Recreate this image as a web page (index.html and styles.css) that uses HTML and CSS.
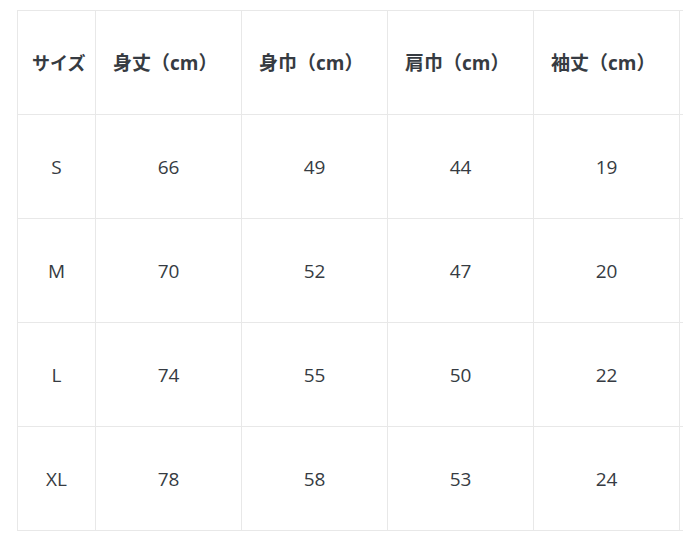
FILE: index.html
```html
<!DOCTYPE html>
<html lang="ja">
<head>
<meta charset="utf-8">
<link rel="stylesheet" href="styles.css">
</head>
<body>
<div class="wrap">
<table class="size-table">
  <colgroup>
    <col class="col-size">
    <col class="col-val">
    <col class="col-val">
    <col class="col-val">
    <col class="col-val">
    <col class="col-val">
  </colgroup>
  <thead>
    <tr>
      <th class="th-size">サイズ</th>
      <th>身丈（cm）</th>
      <th>身巾（cm）</th>
      <th>肩巾（cm）</th>
      <th>袖丈（cm）</th>
      <th></th>
    </tr>
  </thead>
  <tbody>
    <tr><td>S</td><td>66</td><td>49</td><td>44</td><td>19</td><td></td></tr>
    <tr><td>M</td><td>70</td><td>52</td><td>47</td><td>20</td><td></td></tr>
    <tr><td>L</td><td>74</td><td>55</td><td>50</td><td>22</td><td></td></tr>
    <tr><td>XL</td><td>78</td><td>58</td><td>53</td><td>24</td><td></td></tr>
  </tbody>
</table>
</div>
</body>
</html>
```

FILE: styles.css
```css
html, body {
  margin: 0;
  padding: 0;
  background: #ffffff;
  overflow: hidden;
}
.wrap {
  padding: 10px 0 0 17px;
  width: 900px;
}
.size-table {
  border-collapse: collapse;
  table-layout: fixed;
  width: 808px;
  color: #363b42;
  font-family: "Open Sans", "Noto Sans CJK JP", sans-serif;
  font-size: 19px;
}
.col-size {
  width: 78px;
}
.col-val {
  width: 146px;
}
.size-table th,
.size-table td {
  border: 1px solid #e8e8e8;
  height: 104px;
  padding: 0;
  box-sizing: border-box;
}
.size-table th {
  font-family: "Open Sans", "Noto Sans CJK JP", sans-serif;
  font-weight: 700;
  font-size: 19px;
  text-align: left;
  padding-left: 17px;
  padding-bottom: 2px;
  text-spacing-trim: space-all;
}
.size-table th.th-size {
  font-size: 18px;
  padding-left: 14px;
}
.size-table td {
  text-align: center;
  font-weight: 400;
}
```
